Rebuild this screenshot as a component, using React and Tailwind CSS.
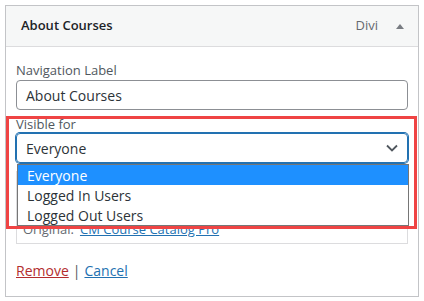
export default function App() {
  const font = { fontFamily: '"Open Sans", "Noto Sans", sans-serif' };

  return (
    <div className="w-[424px] h-[301px] bg-white p-[5px] text-[13px]" style={font}>
      <div className="relative h-[292px] border border-[#c3c4c7]">
        {/* Header */}
        <div className="h-[41px] flex items-center justify-between bg-[#f6f7f7] border-b border-[#dcdcde] pl-[15px] pr-[14px]">
          <span className="font-semibold text-[13px] text-[#1d2327]">About Courses</span>
          <div className="flex items-center gap-[18px]">
            <span className="text-[13px] text-[#646970]">Divi</span>
            <svg width="8" height="5" viewBox="0 0 8 5">
              <polygon points="4,0 8,5 0,5" fill="#787c82" />
            </svg>
          </div>
        </div>

        {/* Body */}
        <div className="px-[10px] pt-[13px]">
          <div className="text-[#50575e] leading-[20px]">Navigation Label</div>
          <div className="h-[30px] flex items-center px-[9px] border border-[#8c8f94] rounded-[4px] text-[14px] text-[#2c3338]">
            About Courses
          </div>

          <div className="mt-[5px] text-[#50575e] leading-[18px]">Visible for</div>
          <div className="relative">
            <div className="h-[30px] flex items-center justify-between pl-[9px] pr-[9px] border border-[#2271b1] rounded-[4px] shadow-[0_0_0_1px_#2271b1] text-[14px] text-[#2c3338]">
              <span>Everyone</span>
              <svg width="12" height="8" viewBox="0 0 12 8">
                <polyline points="1,1.5 6,6.5 11,1.5" fill="none" stroke="#50575e" strokeWidth="1.8" />
              </svg>
            </div>

            {/* Open option list */}
            <div className="absolute z-10 left-[1px] top-[31px] w-[392px] bg-white border border-[#767676] text-[14px] text-[#2c3338]">
              <div className="h-[20px] flex items-center px-[9px] bg-[#1e90ff] text-white">Everyone</div>
              <div className="h-[20px] flex items-center px-[9px]">Logged In Users</div>
              <div className="h-[20px] flex items-center px-[9px]">Logged Out Users</div>
            </div>
          </div>

          <div className="mt-[8px] w-[392px] h-[73px] flex items-end gap-[6px] px-[6px] pb-[4px] border border-[#dcdcde] text-[#646970]">
            <span>Original:</span>
            <a href="#" className="text-[#2271b1] underline">CM Course Catalog Pro</a>
          </div>

          <div className="mt-[16px] flex items-center gap-[4px] text-[14px]">
            <a href="#" className="text-[#b32d2e] underline">Remove</a>
            <span className="text-[#50575e]">|</span>
            <a href="#" className="text-[#2271b1] underline">Cancel</a>
          </div>
        </div>

        {/* Annotation frame */}
        <div className="absolute z-20 left-0 top-[110px] w-[411px] h-[113px] border-[3px] border-[#ef4444] pointer-events-none" />
      </div>
    </div>
  );
}
